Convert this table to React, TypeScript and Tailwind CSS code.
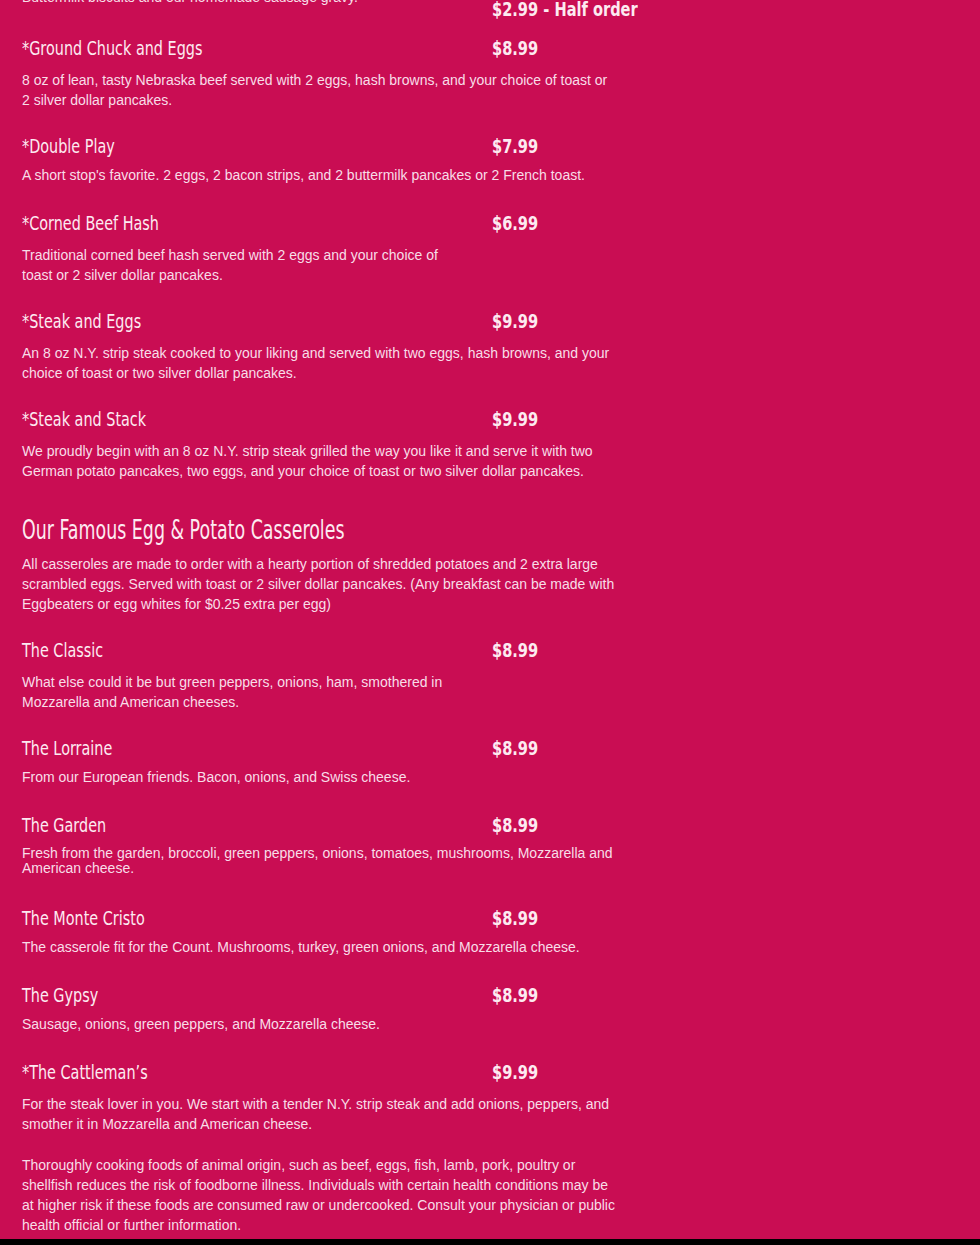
type Item = {
  name: string;
  price: string;
  desc: React.ReactNode;
  mt: string;
  gap: string;
  lh?: string;
};

const items: Item[] = [
  {
    name: "*Ground Chuck and Eggs",
    price: "$8.99",
    desc: "8 oz of lean, tasty Nebraska beef served with 2 eggs, hash browns, and your choice of toast or 2 silver dollar pancakes.",
    mt: "mt-[9px]",
    gap: "mt-[7px]",
  },
  {
    name: "*Double Play",
    price: "$7.99",
    desc: "A short stop's favorite. 2 eggs, 2 bacon strips, and 2 buttermilk pancakes or 2 French toast.",
    mt: "mt-[21px]",
    gap: "mt-[4px]",
  },
  {
    name: "*Corned Beef Hash",
    price: "$6.99",
    desc: (
      <>
        Traditional corned beef hash served with 2 eggs and your choice of
        <br />
        toast or 2 silver dollar pancakes.
      </>
    ),
    mt: "mt-[23px]",
    gap: "mt-[7px]",
  },
  {
    name: "*Steak and Eggs",
    price: "$9.99",
    desc: "An 8 oz N.Y. strip steak cooked to your liking and served with two eggs, hash browns, and your choice of toast or two silver dollar pancakes.",
    mt: "mt-[21px]",
    gap: "mt-[7px]",
  },
  {
    name: "*Steak and Stack",
    price: "$9.99",
    desc: "We proudly begin with an 8 oz N.Y. strip steak grilled the way you like it and serve it with two German potato pancakes, two eggs, and your choice of toast or two silver dollar pancakes.",
    mt: "mt-[21px]",
    gap: "mt-[7px]",
  },
];

const casseroles: Item[] = [
  {
    name: "The Classic",
    price: "$8.99",
    desc: (
      <>
        What else could it be but green peppers, onions, ham, smothered in
        <br />
        Mozzarella and American cheeses.
      </>
    ),
    mt: "mt-[21px]",
    gap: "mt-[7px]",
  },
  {
    name: "The Lorraine",
    price: "$8.99",
    desc: "From our European friends. Bacon, onions, and Swiss cheese.",
    mt: "mt-[21px]",
    gap: "mt-[4px]",
  },
  {
    name: "The Garden",
    price: "$8.99",
    desc: "Fresh from the garden, broccoli, green peppers, onions, tomatoes, mushrooms, Mozzarella and American cheese.",
    mt: "mt-[23px]",
    gap: "mt-[6px]",
    lh: "leading-[15px]",
  },
  {
    name: "The Monte Cristo",
    price: "$8.99",
    desc: "The casserole fit for the Count. Mushrooms, turkey, green onions, and Mozzarella cheese.",
    mt: "mt-[27px]",
    gap: "mt-[4px]",
  },
  {
    name: "The Gypsy",
    price: "$8.99",
    desc: "Sausage, onions, green peppers, and Mozzarella cheese.",
    mt: "mt-[23px]",
    gap: "mt-[4px]",
  },
  {
    name: "*The Cattleman\u2019s",
    price: "$9.99",
    desc: "For the steak lover in you. We start with a tender N.Y. strip steak and add onions, peppers, and smother it in Mozzarella and American cheese.",
    mt: "mt-[23px]",
    gap: "mt-[7px]",
  },
];

// condensed display face: DejaVu squeezed horizontally to stand in for Oswald
const head = "font-['DejaVu_Sans',sans-serif] text-[#fdeaf1]";
const squeeze = "inline-block origin-left scale-x-[0.72] whitespace-nowrap";
const squeezePrice = "inline-block origin-left scale-x-[0.73] whitespace-nowrap font-bold";
const body = "font-['Liberation_Sans',Arial,sans-serif] text-[14px] text-[#f8dde8]";

function MenuItem({ item }: { item: Item }) {
  return (
    <div className={item.mt}>
      <div className={`flex h-[30px] items-center ${head} text-[20px]`}>
        <h3 className="w-[470px]">
          <span className={squeeze}>{item.name}</span>
        </h3>
        <span className={squeezePrice}>{item.price}</span>
      </div>
      <p className={`${item.gap} w-[594px] ${body} ${item.lh ?? "leading-[20px]"}`}>{item.desc}</p>
    </div>
  );
}

export default function App() {
  return (
    <div className="min-h-screen overflow-hidden bg-black">
      <div className="flex flex-col bg-[#c90d53] px-[22px] pb-[4px]">
        <div className="flex">
          <p className={`-mt-[13px] w-[470px] leading-[20px] ${body}`}>
            Buttermilk biscuits and our homemade sausage gravy.
          </p>
          <p className={`-mt-[6px] leading-[30px] ${head} text-[20px]`}>
            <span className={squeezePrice}>$2.99 - Half order</span>
          </p>
        </div>

        {items.map((it) => (
          <MenuItem key={it.name} item={it} />
        ))}

        <h2 className={`mt-[31px] h-[36px] leading-[36px] ${head} text-[26px]`}>
          <span className="inline-block origin-left scale-x-[0.67] whitespace-nowrap">
            Our Famous Egg &amp; Potato Casseroles
          </span>
        </h2>
        <p className={`mt-[6px] w-[594px] leading-[20px] ${body}`}>
          All casseroles are made to order with a hearty portion of shredded potatoes and 2 extra large
          scrambled eggs. Served with toast or 2 silver dollar pancakes. (Any breakfast can be made with
          Eggbeaters or egg whites for $0.25 extra per egg)
        </p>

        {casseroles.map((it) => (
          <MenuItem key={it.name} item={it} />
        ))}

        <p className={`mt-[21px] w-[594px] leading-[20px] ${body}`}>
          Thoroughly cooking foods of animal origin, such as beef, eggs, fish, lamb, pork, poultry or
          shellfish reduces the risk of foodborne illness. Individuals with certain health conditions may be
          at higher risk if these foods are consumed raw or undercooked. Consult your physician or public
          health official or further information.
        </p>
      </div>
    </div>
  );
}
